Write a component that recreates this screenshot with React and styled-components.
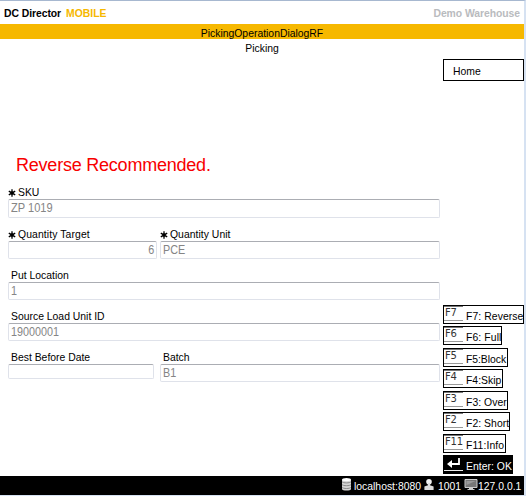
import React from 'react';
import styled, { createGlobalStyle } from 'styled-components';

const Global = createGlobalStyle`
  * { box-sizing: border-box; }
  body { margin: 0; background: #d6e2f2; font-family: "Liberation Sans", Arial, sans-serif; font-size: 10.4px; color: #000; }
`;

const Page = styled.div`
  width: 526px;
  height: 496px;
  border-top: 1px solid #a7b8d0;
  border-right: 2px solid #d6e2f2;
  border-bottom: 1px solid #d6e2f2;
  background: #fff;
  display: flex;
  flex-direction: column;
  overflow: hidden;
  white-space: pre;
`;

const Header = styled.header`
  height: 23px;
  padding: 3px 4px 0;
  display: flex;
  justify-content: space-between;
  align-items: center;
  font-weight: bold;
  line-height: 12px;
`;

const Brand = styled.div`
  display: flex;
  gap: 5px;
`;

const Text = styled.span`
  letter-spacing: ${(p) => p.$ls || 0}px;
  font-size: ${(p) => p.$size || 10.4}px;
  color: ${(p) => p.$color || 'inherit'};
`;

const TitleBar = styled.div`
  height: 15px;
  padding-top: 3px;
  line-height: 13px;
  text-align: center;
  background: #f6b800;
`;

const SubTitle = styled.div`
  height: 16px;
  padding-top: 3px;
  line-height: 13px;
  text-align: center;
`;

const Main = styled.main`
  height: 421px;
  padding-left: 8px;
  display: grid;
  grid-template-columns: 432px 81px;
  column-gap: 3px;
`;

const Form = styled.form`
  padding-top: 99px;
  display: flex;
  flex-direction: column;
`;

const Message = styled.div`
  height: 31px;
  padding-left: 8px;
  line-height: 22px;
`;

const FieldRow = styled.div`
  height: ${(p) => p.$height || 41}px;
  display: grid;
  grid-template-columns: ${(p) => (p.$split ? '149px 280px' : '432px')};
  column-gap: 3px;
`;

const Label = styled.label`
  height: 14px;
  padding-top: 2px;
  padding-left: ${(p) => (p.$required ? 0 : 3)}px;
  display: flex;
  align-items: center;
  gap: 2px;
  line-height: 12px;
`;

const Value = styled.div`
  width: ${(p) => (p.$width ? `${p.$width}px` : '100%')};
  height: ${(p) => p.$height || 18}px;
  padding: 0 2px;
  border: 1px solid #dfe2ea;
  border-top-color: #abadb3;
  border-radius: 2px;
  line-height: 15px;
  text-align: ${(p) => (p.$right ? 'right' : 'left')};
  background: #fff;
`;

const NarrowText = styled.span`
  display: inline-block;
  font-size: 13px;
  color: #858585;
  transform: scaleX(${(p) => p.$scale || 0.83});
  transform-origin: ${(p) => (p.$right ? 'right' : 'left')};
`;

const Side = styled.aside`
  padding: 4px 0 2px;
  display: flex;
  flex-direction: column;
  justify-content: space-between;
`;

const HomeButton = styled.div`
  width: 81px;
  height: 22px;
  padding-left: 9px;
  border: 1px solid #000;
  line-height: 23px;
`;

const Keys = styled.div`
  height: 169px;
  display: flex;
  flex-direction: column;
  justify-content: space-between;
`;

const KeyButton = styled.div`
  width: ${(p) => p.$width}px;
  height: 19px;
  border: 1px solid #000;
  display: flex;
  gap: 3px;
  color: ${(p) => (p.$dark ? '#fff' : '#000')};
  background: ${(p) => (p.$dark ? '#000' : '#fff')};
`;

const KeyCap = styled.span`
  width: 19px;
  height: 15px;
  flex: none;
  border-top: 1px solid ${(p) => (p.$dark ? '#000' : '#777')};
  border-bottom: 1px solid ${(p) => (p.$dark ? '#eee' : '#999')};
  padding-left: 1px;
  font: 10px/12px "DejaVu Sans", sans-serif;
  letter-spacing: -0.2px;
  color: #333;
`;

const KeyText = styled.span`
  line-height: 21px;
  letter-spacing: ${(p) => p.$ls || 0}px;
`;

const StatusBar = styled.footer`
  height: 19px;
  padding: 0 3px 0 0;
  display: flex;
  justify-content: flex-end;
  align-items: flex-start;
  background: #000;
  color: #fff;
  line-height: 22px;
`;

const StatusItem = styled.span`
  width: ${(p) => p.$width}px;
  display: flex;
  gap: ${(p) => p.$gap}px;
`;

const Icon = styled.svg`
  flex: none;
  display: block;
`;

const Star = () => (
  <Icon width="8" height="8" viewBox="0 0 8 8">
    <path d="M4 .3v7.4M.8 2.1l6.4 3.8M7.2 2.1L.8 5.9" fill="none" stroke="#000" strokeWidth="1.3" />
    <circle cx="4" cy="4" r="1.8" fill="#000" />
  </Icon>
);

const EnterIcon = () => (
  <Icon width="17" height="13" viewBox="0 0 17 13">
    <path d="M14 1v6H5" fill="none" stroke="#fff" strokeWidth="1.8" />
    <path d="M2 7l5-4v8z" fill="#fff" />
  </Icon>
);

const DatabaseIcon = () => (
  <Icon width="11" height="16" viewBox="0 0 11 16">
    <path d="M1 4v9c0 2 9 2 9 0V4z" fill="#d5d5d5" />
    <ellipse cx="5.5" cy="3.6" rx="4.5" ry="1.7" fill="#fff" />
    <path d="M1 5.7c1 1.6 8 1.6 9 0M1 8.5c1 1.6 8 1.6 9 0M1 11.3c1 1.6 8 1.6 9 0" fill="none" stroke="#777" strokeWidth=".8" />
  </Icon>
);

const UserIcon = () => (
  <Icon width="10" height="16" viewBox="0 0 10 16">
    <circle cx="5" cy="5.7" r="2.8" fill="#f1f1f1" />
    <path d="M4 7h2v2.2l3.6 1.3V14H.4v-3.5L4 9.2z" fill="#ddd" />
  </Icon>
);

const MonitorIcon = () => (
  <Icon width="14" height="16" viewBox="0 0 14 16">
    <path d="M1 3.5h12v8H1z" fill="#777" stroke="#ccc" />
    <path d="M2.5 5h9L2.5 9z" fill="#999" />
    <path d="M5.5 12h3v1.5h-3zM3.5 13.5h7" fill="#ccc" stroke="#ccc" />
  </Icon>
);

const Field = ({ label, value, required, ls, ...box }) => (
  <div>
    <Label $required={required}>
      {required && <Star />}
      <Text $ls={ls}>{label}</Text>
    </Label>
    <Value $width={box.width} $height={box.height} $right={box.right}>
      <NarrowText $right={box.right} $scale={box.scale}>{value}</NarrowText>
    </Value>
  </div>
);

const keys = [
  { cap: 'F7', text: 'F7: Reverse', width: 81, ls: 0.08 },
  { cap: 'F6', text: 'F6: Full', width: 59, ls: 0.1 },
  { cap: 'F5', text: 'F5:Block', width: 65, ls: -0.05 },
  { cap: 'F4', text: 'F4:Skip', width: 60, ls: 0 },
  { cap: 'F3', text: 'F3: Over', width: 65, ls: 0.05 },
  { cap: 'F2', text: 'F2: Short', width: 67, ls: 0.05 },
  { cap: 'F11', text: 'F11:Info', width: 63, ls: 0.1 },
  { text: 'Enter: OK', width: 70, ls: 0.03, dark: true },
];

export default function App() {
  return (
    <>
      <Global />
      <Page>
        <Header>
          <Brand>
            <Text $ls={-0.06}>DC Director</Text>
            <Text $color="#f6b800">MOBILE</Text>
          </Brand>
          <Text $color="#b9bbbe" $ls={-0.06}>Demo Warehouse</Text>
        </Header>
        <TitleBar><Text>PickingOperationDialogRF</Text></TitleBar>
        <SubTitle><Text>Picking</Text></SubTitle>
        <Main>
          <Form>
            <Message><Text $size={18} $ls={-0.22} $color="#f80000">Reverse Recommended.</Text></Message>
            <FieldRow $height={42}>
              <Field label="SKU" value="ZP 1019" required height={19} scale={0.85} />
            </FieldRow>
            <FieldRow $split>
              <Field label="Quantity Target" value="6" required right ls={0.1} />
              <Field label="Quantity Unit" value="PCE" required ls={0.03} />
            </FieldRow>
            <FieldRow><Field label="Put Location" value="1" /></FieldRow>
            <FieldRow><Field label="Source Load Unit ID" value="19000001" /></FieldRow>
            <FieldRow $split>
              <Field label="Best Before Date" value="" width={146} height={15} />
              <Field label="Batch" value="B1" />
            </FieldRow>
          </Form>
          <Side>
            <HomeButton><Text>Home</Text></HomeButton>
            <Keys>
              {keys.map((k) => (
                <KeyButton key={k.text} $width={k.width} $dark={k.dark}>
                  <KeyCap $dark={k.dark}>{k.dark ? <EnterIcon /> : k.cap}</KeyCap>
                  <KeyText $ls={k.ls}>{k.text}</KeyText>
                </KeyButton>
              ))}
            </Keys>
          </Side>
        </Main>
        <StatusBar>
          <StatusItem $width={83} $gap={2}><DatabaseIcon /><Text>localhost:8080</Text></StatusItem>
          <StatusItem $width={40} $gap={4}><UserIcon /><Text>1001</Text></StatusItem>
          <StatusItem $width={57} $gap={0}><MonitorIcon /><Text>127.0.0.1</Text></StatusItem>
        </StatusBar>
      </Page>
    </>
  );
}
